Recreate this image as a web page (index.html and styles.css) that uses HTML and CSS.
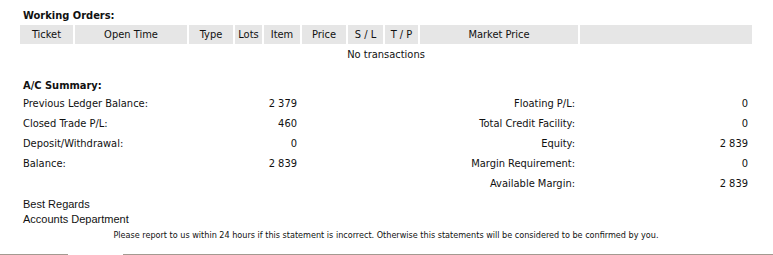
FILE: index.html
```html
<!DOCTYPE html>
<html>
<head>
<meta charset="utf-8">
<link rel="stylesheet" href="styles.css">
</head>
<body>
<div class="page">
  <div class="title">Working Orders:</div>
  <table class="orders">
    <thead>
      <tr>
        <th class="c-ticket">Ticket</th>
        <th class="c-time">Open Time</th>
        <th class="c-type">Type</th>
        <th class="c-lots">Lots</th>
        <th class="c-item">Item</th>
        <th class="c-price">Price</th>
        <th class="c-sl">S / L</th>
        <th class="c-tp">T / P</th>
        <th class="c-market">Market Price</th>
        <th class="c-empty"></th>
      </tr>
    </thead>
    <tbody>
      <tr><td colspan="10" class="empty-row">No transactions</td></tr>
    </tbody>
  </table>
  <div class="title summary-title">A/C Summary:</div>
  <div class="summary">
    <div class="lbl">Previous Ledger Balance:</div><div class="val">2 379</div><div class="rlbl">Floating P/L:</div><div class="val">0</div>
    <div class="lbl">Closed Trade P/L:</div><div class="val">460</div><div class="rlbl">Total Credit Facility:</div><div class="val">0</div>
    <div class="lbl">Deposit/Withdrawal:</div><div class="val">0</div><div class="rlbl">Equity:</div><div class="val">2 839</div>
    <div class="lbl">Balance:</div><div class="val">2 839</div><div class="rlbl">Margin Requirement:</div><div class="val">0</div>
    <div class="lbl"></div><div class="val"></div><div class="rlbl">Available Margin:</div><div class="val">2 839</div>
  </div>
  <div class="regards">Best Regards<br>Accounts Department</div>
  <div class="notice">Please report to us within 24 hours if this statement is incorrect. Otherwise this statements will be considered to be confirmed by you.</div>
</div>
<div class="bottom-rule"><span class="seg seg-a"></span><span class="gap"></span><span class="seg seg-b"></span></div>
</body>
</html>
```
FILE: styles.css
```css
html, body {
  margin: 0;
  padding: 0;
  background: #fff;
}
body {
  font-family: "DejaVu Sans Condensed", "DejaVu Sans", sans-serif;
  font-size: 11px;
  color: #111;
  width: 773px;
  height: 255px;
  overflow: hidden;
  position: relative;
}
.page {
  padding: 9px 0 0 20px;
  width: 732px;
}
.title {
  font-weight: bold;
  line-height: 14px;
  padding-left: 3px;
  height: 16px;
}
.orders {
  border-collapse: separate;
  border-spacing: 2px 0;
  margin-left: -2px;
  table-layout: fixed;
  width: 736px;
}
.orders th {
  background: #e6e6e6;
  font-weight: normal;
  height: 19px;
  padding: 0;
  text-align: center;
  line-height: 19px;
}
.c-ticket { width: 53px; }
.c-time { width: 112px; }
.c-type { width: 44px; }
.c-lots { width: 27px; }
.c-item { width: 36px; }
.c-price { width: 44px; }
.c-sl { width: 35px; }
.c-tp { width: 33px; }
.c-market { width: 158px; }
.c-empty { width: 172px; }
.empty-row {
  text-align: center;
  height: 22px;
  line-height: 22px;
  padding: 0;
}
.summary-title {
  margin-top: 13px;
  height: 15px;
}
.summary {
  display: grid;
  grid-template-columns: 200px 74px 278px 173px;
  grid-auto-rows: 20px;
  padding-left: 3px;
  line-height: 20px;
}
.val, .rlbl { text-align: right; }
.regards {
  font-family: "Liberation Sans", Arial, sans-serif;
  font-size: 11px;
  line-height: 15px;
  padding-left: 3px;
  margin-top: 3px;
}
.notice {
  font-size: 9px;
  text-align: center;
  line-height: 12px;
  margin-top: 2px;
}
.bottom-rule {
  position: absolute;
  left: 0;
  bottom: 0;
  width: 773px;
  height: 1px;
  display: flex;
}
.seg { height: 1px; background: #a39a91; }
.seg-a { width: 68px; }
.gap { width: 55px; }
.seg-b { flex: 1; }
```
